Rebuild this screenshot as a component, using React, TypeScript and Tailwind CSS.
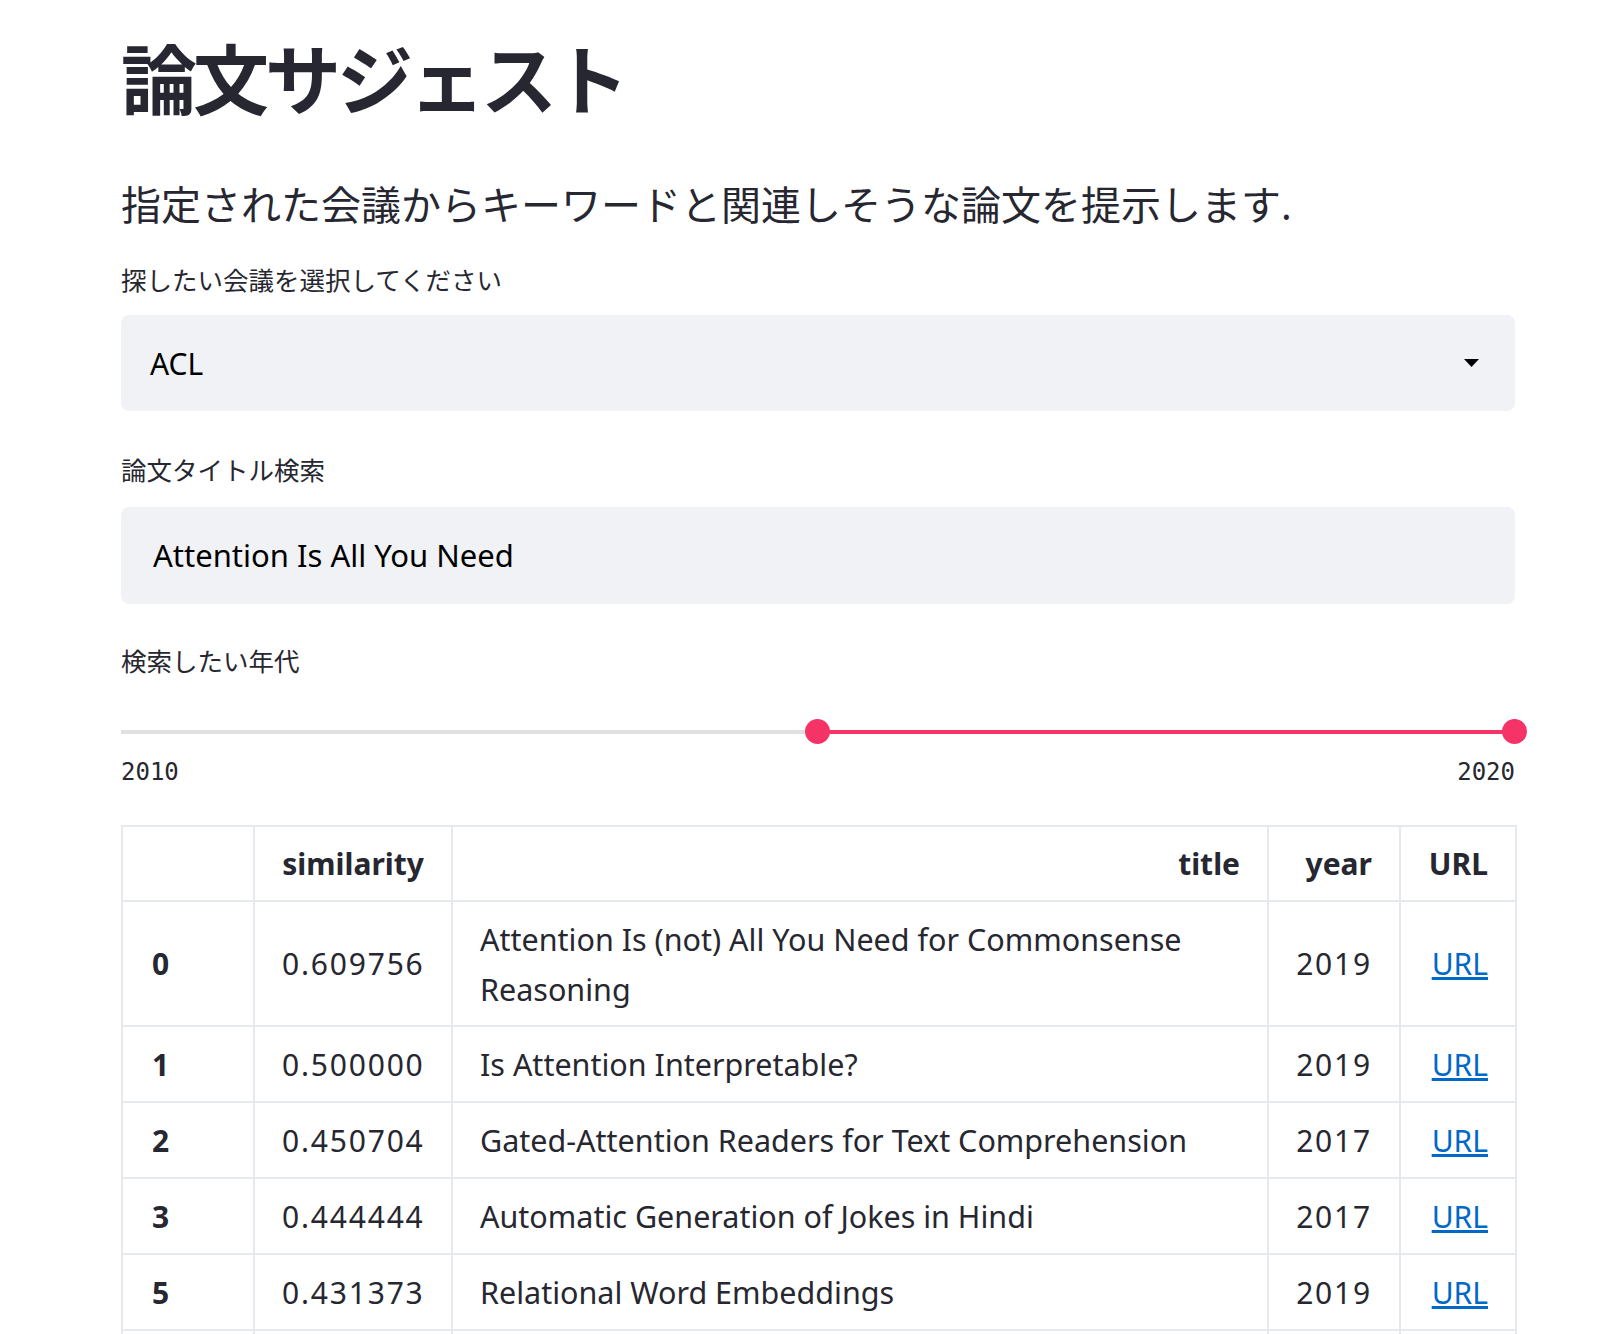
import React from 'react';

const rows = [
  { idx: '0', sim: '0.609756', title: 'Attention Is (not) All You Need for Commonsense Reasoning', year: '2019' },
  { idx: '1', sim: '0.500000', title: 'Is Attention Interpretable?', year: '2019' },
  { idx: '2', sim: '0.450704', title: 'Gated-Attention Readers for Text Comprehension', year: '2017' },
  { idx: '3', sim: '0.444444', title: 'Automatic Generation of Jokes in Hindi', year: '2017' },
  { idx: '5', sim: '0.431373', title: 'Relational Word Embeddings', year: '2019' },
  { idx: '6', sim: '0.428571', title: 'Learning Attention for Historical Text Normalization', year: '2016' },
];

const jp = { fontFamily: '"Noto Sans", "Noto Sans CJK JP", sans-serif' };

const App: React.FC = () => {
  return (
    <div className="w-[1618px] h-[1334px] overflow-hidden bg-white text-[#262730]" style={jp}>
      <div className="ml-[121px] w-[1394px] flex flex-col">
        <div className="h-[160px] flex items-center">
          <h1 className="text-[76px] font-bold leading-none tracking-[-4px]">論文サジェスト</h1>
        </div>
        <div className="h-[90px] flex items-center">
          <p className="text-[40px] leading-none">指定された会議からキーワードと関連しそうな論文を提示します.</p>
        </div>

        <div className="h-[60px] flex items-center text-[25.5px]">探したい会議を選択してください</div>
        <div className="mt-[5px] h-[96px] rounded-[8px] bg-[#f0f2f6] flex items-center justify-between pl-[29px] pr-[36px]">
          <span className="text-[30px] text-black">ACL</span>
          <svg width="15" height="8" viewBox="0 0 15 8"><path d="M0 0h15L7.5 8z" fill="#000" /></svg>
        </div>

        <div className="mt-[29px] h-[60px] flex items-center text-[25.5px]">論文タイトル検索</div>
        <div className="mt-[7px] h-[97px] rounded-[8px] bg-[#f0f2f6] flex items-center pl-[32px]">
          <span className="text-[31px] text-black">Attention Is All You Need</span>
        </div>

        <div className="mt-[27px] h-[60px] flex items-center text-[25.5px]">検索したい年代</div>
        <div className="mt-[21px] h-[40px] relative flex items-center">
          <div className="w-full h-[4px] bg-[#e0e0e0] flex">
            <div className="w-[696px]" />
            <div className="flex-1 bg-[#f63366]" />
          </div>
          <div className="absolute left-[684px] top-[7px] w-[25px] h-[25px] rounded-full bg-[#f63366]" />
          <div className="absolute right-[-12px] top-[7px] w-[25px] h-[25px] rounded-full bg-[#f63366]" />
        </div>
        <div className="h-[40px] flex items-center justify-between text-[24px]" style={{ fontFamily: '"DejaVu Sans Mono", monospace' }}>
          <span>2010</span>
          <span>2020</span>
        </div>

        <table className="mt-[33px] w-[1394px] border-collapse text-[30px] table-fixed">
          <colgroup>
            <col className="w-[132px]" />
            <col className="w-[198px]" />
            <col className="w-[816px]" />
            <col className="w-[132px]" />
            <col className="w-[116px]" />
          </colgroup>
          <thead>
            <tr className="h-[75px]">
              <th className="border-2 border-[#e6e9ef]" />
              <th className="border-2 border-[#e6e9ef] text-right px-[27px] font-bold">similarity</th>
              <th className="border-2 border-[#e6e9ef] text-right px-[27px] font-bold">title</th>
              <th className="border-2 border-[#e6e9ef] text-right px-[27px] font-bold">year</th>
              <th className="border-2 border-[#e6e9ef] text-right px-[27px] font-bold">URL</th>
            </tr>
          </thead>
          <tbody>
            {rows.map((r) => (
              <tr key={r.idx} className={r.idx === '0' ? 'h-[125px]' : 'h-[76px]'}>
                <td className="border-2 border-[#e6e9ef] px-[29px] font-bold">{r.idx}</td>
                <td className="border-2 border-[#e6e9ef] px-[27px] text-right tracking-[1.8px]">{r.sim}</td>
                <td className="border-2 border-[#e6e9ef] px-[27px] leading-[50px] text-[30.5px]">{r.title}</td>
                <td className="border-2 border-[#e6e9ef] px-[27px] text-right tracking-[1.8px]">{r.year}</td>
                <td className="border-2 border-[#e6e9ef] px-[27px] text-right">
                  <a href="#" className="text-[#0068c9] underline">URL</a>
                </td>
              </tr>
            ))}
          </tbody>
        </table>
      </div>
    </div>
  );
};

export default App;
